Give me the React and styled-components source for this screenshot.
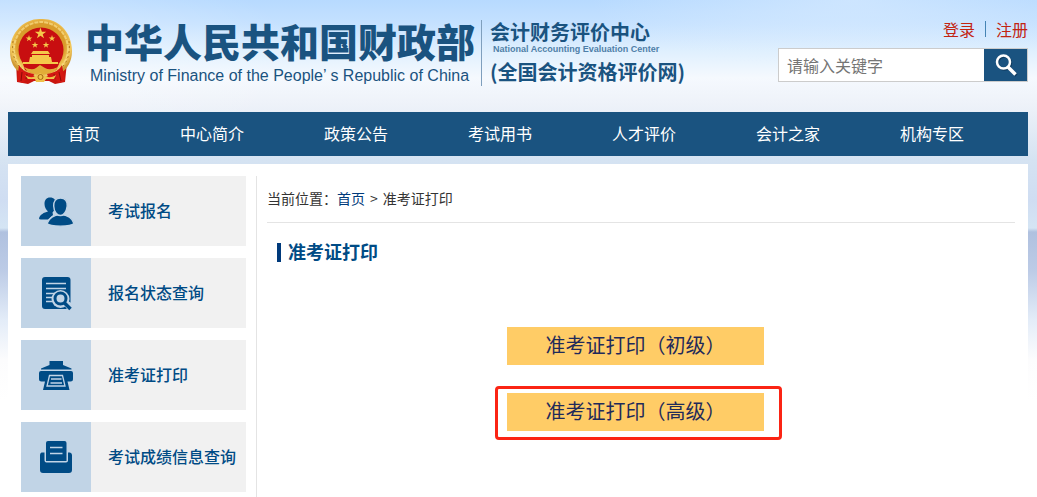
import React from "react";
import styled, { createGlobalStyle } from "styled-components";

const GlobalStyle = createGlobalStyle`
  * {
    box-sizing: border-box;
  }
  body {
    margin: 0;
    background-color: white;
    color: #333;
    font-family: "Noto Sans CJK SC", "Liberation Sans", sans-serif;
    font-size: 14px;
  }
  a {
    color: inherit;
    text-decoration: none;
  }
`;

const Page = styled.div`
  min-height: 100vh;
  display: flex;
  flex-direction: column;
  padding: 0 9px 0 8px;
  background-image: radial-gradient(
      ellipse 260px 70px at 82% 0,
      rgba(226, 240, 255, 0.5),
      rgba(226, 240, 255, 0)
    ),
    radial-gradient(
      ellipse 300px 110px at 0 60px,
      rgba(255, 255, 255, 0.4),
      rgba(255, 255, 255, 0)
    ),
    linear-gradient(
      #b7daff 0,
      #c5e1ff 24px,
      #e0f0fe 52px,
      #f5f9fe 78px,
      #eef2f9 104px,
      #d5e3f2 160px,
      #cfddf2 200px,
      #d5e5f4 228px,
      #b0c1df 232px,
      #bccbe6 270px,
      #e3ecf8 320px,
      #fcfcfd 360px,
      #fff 400px
    );
  background-repeat: no-repeat;
`;

const Header = styled.header`
  height: 112px;
  display: flex;
  justify-content: space-between;
  align-items: flex-start;
`;

const Brand = styled.a`
  display: flex;
  align-items: flex-start;
  padding-top: 18px;
  color: #1a5380;
  white-space: nowrap;
`;

const Ministry = styled.div`
  padding-left: 10px;
  display: flex;
  flex-direction: column;
  gap: 4px;
`;

const MinistryName = styled.span`
  font-size: 39px;
  font-weight: 900;
  line-height: 44px;
`;

const MinistryEnglish = styled.span`
  padding-left: 5px;
  font-family: "Liberation Sans", sans-serif;
  font-size: 16px;
  line-height: 20px;
`;

const Center = styled.div`
  margin: 2px 0 0 6px;
  padding-left: 8px;
  height: 66px;
  display: flex;
  flex-direction: column;
  border-left: 1px solid #7f9fbd;
`;

const CenterName = styled.span`
  font-size: 20px;
  font-weight: 700;
  line-height: 24px;
`;

const CenterEnglish = styled.span`
  padding: 0 0 6px 3px;
  color: #4f7fa8;
  font-family: "Liberation Sans", sans-serif;
  font-size: 9px;
  font-weight: 700;
  line-height: 10px;
`;

const Tools = styled.div`
  width: 250px;
  padding-top: 18px;
`;

const Account = styled.div`
  height: 24px;
  padding-bottom: 2px;
  display: flex;
  justify-content: flex-end;
  align-items: center;
  color: #c22412;
  font-size: 16px;
`;

const Divider = styled.span`
  width: 1px;
  height: 16px;
  margin: 0 10px;
  background-color: #4584b4;
`;

const Search = styled.form`
  height: 34px;
  margin-top: 6px;
  display: flex;
  border: 1px solid #ccc;
  background-color: white;
`;

const SearchInput = styled.input`
  flex: 1;
  min-width: 0;
  padding: 0 8px;
  border: 0;
  background-color: transparent;
  font-family: inherit;
  font-size: 16px;
  &::placeholder {
    color: #757575;
  }
`;

const SearchButton = styled.button`
  width: 43px;
  padding: 0;
  display: flex;
  justify-content: center;
  align-items: center;
  border: 0;
  background-color: #1a5380;
  cursor: pointer;
`;

const Nav = styled.nav`
  height: 44px;
  padding: 0 0 2px 20px;
  display: flex;
  align-items: center;
  background-color: #1a5380;
`;

const NavLink = styled.a`
  padding: 0 40px;
  color: white;
  font-size: 16px;
  white-space: nowrap;
`;

const Panel = styled.div`
  flex: 1;
  margin-top: 8px;
  padding: 12px 13px 0;
  display: flex;
  background-color: white;
`;

const Sidebar = styled.aside`
  width: 225px;
  flex-shrink: 0;
  display: flex;
  flex-direction: column;
  gap: 12px;
`;

const SideLink = styled.a`
  height: 70px;
  display: flex;
  align-items: center;
  background-color: #f1f1f1;
  color: #004b85;
  font-size: 16px;
  font-weight: 500;
`;

const SideText = styled.span`
  padding-bottom: 2px;
`;

const SideIcon = styled.svg`
  width: 70px;
  height: 70px;
  margin-right: 17px;
  background-color: #c1d4e6;
`;

const Main = styled.main`
  flex: 1;
  margin-left: 10px;
  padding-left: 10px;
  border-left: 1px solid #e4e4e4;
`;

const Breadcrumb = styled.div`
  height: 47px;
  padding-bottom: 2px;
  display: flex;
  align-items: center;
  border-bottom: 1px solid #e4e4e4;
`;

const HomeLink = styled.a`
  color: #003a7b;
`;

const Arrow = styled.span`
  margin: 0 5px;
`;

const Title = styled.h1`
  height: 19px;
  margin: 20px 0 0 10px;
  padding-left: 7px;
  border-left: 4px solid #003a7b;
  color: #004b85;
  font-size: 18px;
  font-weight: 700;
  line-height: 17px;
`;

const Actions = styled.div`
  padding: 65px 11px 0 0;
  display: flex;
  flex-direction: column;
  align-items: center;
  gap: 28px;
`;

const Action = styled.div`
  position: relative;
`;

const ActionButton = styled.button`
  width: 257px;
  height: 38px;
  padding: 0 0 4px;
  display: block;
  border: 0;
  background-color: #ffcc66;
  color: #1f2a5a;
  font-family: inherit;
  font-size: 20px;
  cursor: pointer;
`;

const Highlight = styled.div`
  position: absolute;
  top: -7px;
  right: -18px;
  bottom: -9px;
  left: -12px;
  border: 3px solid #fb2414;
  border-radius: 4px;
  pointer-events: none;
`;

const Emblem = () => (
  <svg width="67" height="68" viewBox="0 0 67 68" aria-hidden="true">
    <defs>
      <radialGradient id="gold" cx="50%" cy="45%" r="55%">
        <stop offset="0.7" stopColor="#d99c2b" />
        <stop offset="0.88" stopColor="#f3c95c" />
        <stop offset="1" stopColor="#d09a35" />
      </radialGradient>
      <path
        id="star"
        d="M0-1 .23-.31 .95-.31 .37.12 .59.81 0 .38-.59.81-.37.12-.95-.31-.23-.31Z"
      />
    </defs>
    <path d="M8 44 9 64 20 66 26 63H41L47 66 57 64 59 44Z" fill="#c9160f" />
    <path
      d="M33 1C49 0 64 13 64 33 64 44 59 51 53 55L44 58H22L13 55C6 51 2 44 2 33 2 14 17 0 33 1Z"
      fill="url(#gold)"
    />
    <circle
      cx="33"
      cy="31"
      r="27"
      fill="none"
      stroke="#fae08a"
      strokeWidth="2"
      strokeDasharray="4 1"
      opacity="0.7"
    />
    <path
      d="M5 23C3 41 10 50 20 55M61 23C63 41 56 50 46 55"
      fill="none"
      stroke="#b0761a"
      strokeWidth="1"
      strokeDasharray="2 3"
    />
    <circle cx="33" cy="32" r="22.5" fill="#c80e10" />
    <g fill="#f5c94a">
      <use href="#star" transform="translate(32.5 15.5) scale(6)" />
      <use href="#star" transform="translate(21 20.500) scale(3.500)" />
      <use href="#star" transform="translate(44 20.500) scale(3.500)" />
      <use href="#star" transform="translate(27 27) scale(3.500)" />
      <use href="#star" transform="translate(38 27) scale(3.500)" />
      <path d="M25 33H40L42 36H23ZM24 37H41V39H24ZM22 39H43L44 44H50V46H15V44H21Z" />
    </g>
    <path d="M15 46H51L48 52 41 55H24L17 52Z" fill="#c80e10" />
    <path
      d="M16 49Q24 53 28 50L32 47 37 50Q42 53 50 49L46 54 38 56H27L20 54Z"
      fill="#e2ac38"
    />
    <path
      d="M11 47C14 53 20 55 26 56L24 63 19 61 15 65 9 63ZM54 47C51 53 45 55 39 56L42 63 47 61 51 65 57 63Z"
      fill="#d41812"
    />
    <path
      d="M14 54 13 63M19 56 18 61M51 54 53 63M46 56 47 61"
      stroke="#8d0b08"
      strokeWidth="1"
    />
    <path
      d="M17 57Q23 61 27 58L32 55 38 58Q42 61 48 57L46 61 38 61 36 64H28L27 61 20 61Z"
      fill="#efc14b"
    />
    <circle cx="32.500" cy="59" r="2.500" fill="none" stroke="#a86812" />
  </svg>
);

const SearchIcon = () => (
  <svg width="24" height="24" viewBox="0 0 24 24" fill="none">
    <g stroke="#0b2f4d" opacity="0.6" transform="translate(1 1)">
      <circle cx="9.5" cy="9" r="6.5" strokeWidth="2.5" />
      <path d="m14 14 7.500 7.500" strokeWidth="3.500" />
    </g>
    <g stroke="white">
      <circle cx="9.5" cy="9" r="6.5" strokeWidth="2.5" />
      <path d="m14 14 7.500 7.500" strokeWidth="3.500" />
    </g>
  </svg>
);

const PeopleIcon = () => (
  <SideIcon viewBox="0 0 70 70" fill="#004b85" aria-hidden="true">
    <path d="M29 21.5C33 21.500 35 24 35 28.500 35 32 33 35 31.500 36.500L32 39 27 43.500H20Q18 43.500 18 42.500C19 38.500 23 36.500 27 35.500 25 33.500 23.500 31 23.500 28 23.500 24 25.500 21.500 29 21.500Z" />
    <g stroke="#c1d4e6" strokeWidth="1.4">
      <path d="M26 47.500C28 42 33 39 39.500 38.500 46 39 51.500 42 53 47.500 50 51 29 51 26 47.500Z" />
      <path d="M39.500 22C44.500 22 46.500 25.500 46.200 30 45.500 36 42.500 39.500 39.500 39.500 36 39.500 33 36 32.700 30 32.500 25.500 34.500 22 39.500 22Z" />
    </g>
  </SideIcon>
);

const QueryIcon = () => (
  <SideIcon viewBox="0 0 70 70" fill="none" aria-hidden="true">
    <rect x="21" y="19" width="28.5" height="32" rx="3" fill="#004b85" />
    <path
      d="M25 25.500H45M25 30.500H45M25 35.500H35M25 39.500H31M25 43.500H31"
      stroke="#c1d4e6"
      strokeWidth="1.5"
    />
    <circle cx="39.500" cy="41" r="9" fill="#c1d4e6" />
    <path d="M43 47 47 43 52 46V54H48Z" fill="#c1d4e6" />
    <circle cx="39.500" cy="40.500" r="5.500" stroke="#004b85" strokeWidth="3" />
    <path d="m43.500 45 6 6" stroke="#004b85" strokeWidth="3.5" />
  </SideIcon>
);

const PrinterIcon = () => (
  <SideIcon viewBox="0 0 70 70" fill="#004b85" aria-hidden="true">
    <path d="M28.500 21H42V25L50.500 28.500V29.500H20V28.500L28.500 25Z" />
    <path d="M20 31H50Q52 31 52 33V39Q52 41.500 49.500 41.500H46.500L48.500 50H22L24 41.500H20.500Q18 41.500 18 39V33Q18 31 20 31Z" />
    <path
      d="M28.500 35.500H41.500L44 46H26Z"
      fill="none"
      stroke="#c1d4e6"
      strokeWidth="1.3"
    />
    <path
      d="M30 39H40.500M29.500 43H41"
      fill="none"
      stroke="#c1d4e6"
      strokeWidth="1.3"
    />
  </SideIcon>
);

const TrayIcon = () => (
  <SideIcon viewBox="0 0 70 70" fill="#004b85" aria-hidden="true">
    <path d="M20.500 30.500H23.500V38.500Q23.500 40.500 25.500 40.500H45Q47 40.500 47 38.500V30.500H49Q51 31 51 33V48Q51 51 48 51H22Q19 51 19 48V33Q19 31 20.500 30.500Z" />
    <path d="M27 19H43.500Q45.500 19 45.500 21V39H25V21Q25 19 27 19Z" />
    <path
      d="M29 25.500H41.500M29 31.500H41.500"
      fill="none"
      stroke="#c1d4e6"
      strokeWidth="1.5"
    />
  </SideIcon>
);

const navItems = [
  "首页",
  "中心简介",
  "政策公告",
  "考试用书",
  "人才评价",
  "会计之家",
  "机构专区"
];

const sideItems = [
  { label: "考试报名", Icon: PeopleIcon },
  { label: "报名状态查询", Icon: QueryIcon },
  { label: "准考证打印", Icon: PrinterIcon },
  { label: "考试成绩信息查询", Icon: TrayIcon }
];

const App = () => (
  <>
    <GlobalStyle />
    <Page>
      <Header>
        <Brand href="#">
          <Emblem />
          <Ministry>
            <MinistryName>中华人民共和国财政部</MinistryName>
            <MinistryEnglish>
              Ministry of Finance of the People’ s Republic of China
            </MinistryEnglish>
          </Ministry>
          <Center>
            <CenterName>会计财务评价中心</CenterName>
            <CenterEnglish>National Accounting Evaluation Center</CenterEnglish>
            <CenterName>(全国会计资格评价网)</CenterName>
          </Center>
        </Brand>
        <Tools>
          <Account>
            <a href="#">登录</a>
            <Divider />
            <a href="#">注册</a>
          </Account>
          <Search onSubmit={e => e.preventDefault()}>
            <SearchInput
              type="text"
              placeholder="请输入关键字"
              aria-label="请输入关键字"
            />
            <SearchButton type="submit" aria-label="搜索">
              <SearchIcon />
            </SearchButton>
          </Search>
        </Tools>
      </Header>
      <Nav>
        {navItems.map(item => (
          <NavLink href="#" key={item}>
            {item}
          </NavLink>
        ))}
      </Nav>
      <Panel>
        <Sidebar>
          {sideItems.map(({ label, Icon }) => (
            <SideLink href="#" key={label}>
              <Icon />
              <SideText>{label}</SideText>
            </SideLink>
          ))}
        </Sidebar>
        <Main>
          <Breadcrumb>
            当前位置：
            <HomeLink href="#">首页</HomeLink>
            <Arrow>&gt;</Arrow>
            准考证打印
          </Breadcrumb>
          <Title>准考证打印</Title>
          <Actions>
            <Action>
              <ActionButton type="button">准考证打印（初级）</ActionButton>
            </Action>
            <Action>
              <ActionButton type="button">准考证打印（高级）</ActionButton>
              <Highlight />
            </Action>
          </Actions>
        </Main>
      </Panel>
    </Page>
  </>
);

export default App;
